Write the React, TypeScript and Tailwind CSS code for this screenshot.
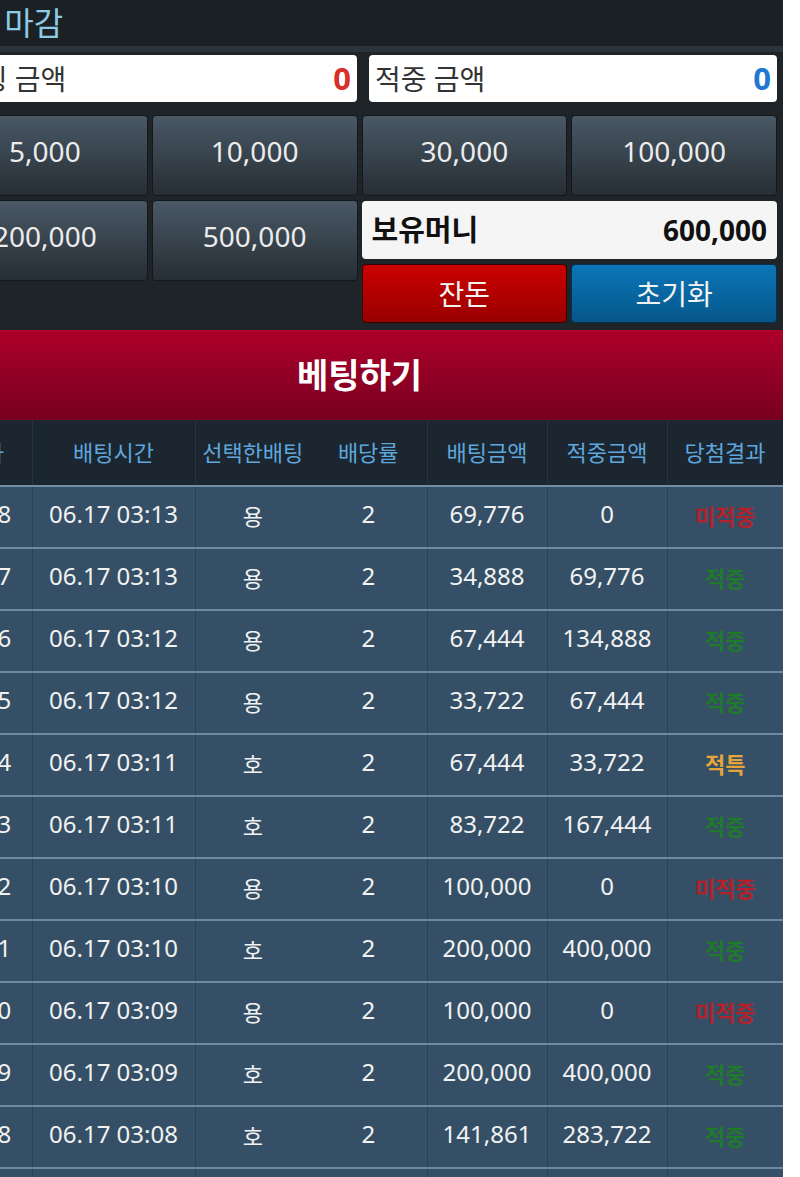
import React from "react";

const amounts = ["5,000", "10,000", "30,000", "100,000"];

const rows = [
  ["1208", "06.17 03:13", "용", "2", "69,776", "0", "미적중"],
  ["1207", "06.17 03:13", "용", "2", "34,888", "69,776", "적중"],
  ["1206", "06.17 03:12", "용", "2", "67,444", "134,888", "적중"],
  ["1205", "06.17 03:12", "용", "2", "33,722", "67,444", "적중"],
  ["1204", "06.17 03:11", "호", "2", "67,444", "33,722", "적특"],
  ["1203", "06.17 03:11", "호", "2", "83,722", "167,444", "적중"],
  ["1202", "06.17 03:10", "용", "2", "100,000", "0", "미적중"],
  ["1201", "06.17 03:10", "호", "2", "200,000", "400,000", "적중"],
  ["1200", "06.17 03:09", "용", "2", "100,000", "0", "미적중"],
  ["1199", "06.17 03:09", "호", "2", "200,000", "400,000", "적중"],
  ["1198", "06.17 03:08", "호", "2", "141,861", "283,722", "적중"],
  ["1197", "06.17 03:08", "용", "2", "100,000", "200,000", "적중"],
];

const resultColor: Record<string, string> = {
  미적중: "text-[#b3222a]",
  적중: "text-[#1f7a2c]",
  적특: "text-[#e6a53a]",
};

const headers = ["회차", "배팅시간", "선택한배팅", "배당률", "배팅금액", "적중금액", "당첨결과"];
const widths = ["w-[96px]", "w-[163px]", "w-[115px]", "w-[117px]", "w-[120px]", "w-[120px]", "w-[116px]"];

function AmountButton({ label }: { label: string }) {
  return (
    <button className="h-[81px] rounded-[4px] border border-[#14181b] bg-linear-to-b from-[#4a5966] to-[#262e35] pb-[9px] text-[28px] text-[#ececec]">
      {label}
    </button>
  );
}

export default function App() {
  return (
    <div className="min-h-[1177px] bg-white font-['Noto_Sans','Noto_Sans_CJK_KR',sans-serif]">
      <div className="w-[783px] overflow-hidden bg-[#1e2428]">
        <div className="ml-[-64px] w-[847px]">
          {/* top bar */}
          <div className="flex h-[46px] items-center bg-[#1b2024] pl-[1px] text-[32px] text-[#8ccbe3]">
            베팅 마감
          </div>

          {/* bet panel */}
          <div className="border-t-[6px] border-[#2b343b] px-[6px] pt-[3px] pb-[7px]">
            <div className="flex gap-3">
              <div className="flex h-[47px] flex-1 items-center justify-between rounded-[4px] bg-white pr-[6px] pl-[14px]">
                <span className="text-[28px] text-[#333]">배팅 금액</span>
                <span className="text-[31px] font-bold text-[#d8302b]">0</span>
              </div>
              <div className="flex h-[47px] w-[408px] items-center justify-between rounded-[4px] bg-white pr-[6px] pl-[6px]">
                <span className="text-[28px] text-[#333]">적중 금액</span>
                <span className="text-[31px] font-bold text-[#1f78d1]">0</span>
              </div>
            </div>

            <div className="mt-[13px] grid grid-cols-4 gap-x-[4px] gap-y-[4px]">
              {amounts.map((a) => (
                <AmountButton key={a} label={a} />
              ))}
              <AmountButton label="200,000" />
              <AmountButton label="500,000" />
              <div className="col-span-2 flex flex-col gap-[5px] pt-[1px]">
                <div className="flex h-[58px] items-center justify-between rounded-[4px] bg-[#f5f5f5] pr-[10px] pl-[10px]">
                  <span className="text-[29px] font-bold text-[#111]">보유머니</span>
                  <span className="text-[28px] font-bold text-[#111]">600,000</span>
                </div>
                <div className="grid grid-cols-2 gap-[4px]">
                  <button className="h-[59px] rounded-[4px] border border-[#3a0000] bg-linear-to-b from-[#cc0000] to-[#980000] text-[28px] text-[#f3f3f3]">
                    잔돈
                  </button>
                  <button className="h-[59px] rounded-[4px] border border-[#06304d] bg-linear-to-b from-[#0b76b8] to-[#06578b] text-[28px] text-[#f3f3f3]">
                    초기화
                  </button>
                </div>
              </div>
            </div>
          </div>

          {/* bet button */}
          <div className="flex h-[90px] items-center justify-center bg-linear-to-b from-[#ad0029] to-[#780020] text-[34px] font-bold text-white">
            베팅하기
          </div>

          {/* history table */}
          <table className="w-[847px] table-fixed border-collapse">
            <thead>
              <tr className="h-[66px] bg-[#1b2630]">
                {headers.map((h, i) => (
                  <th
                    key={h}
                    className={`${widths[i]} ${i === 2 ? "" : "border-r border-r-[#283540]"} border-b-2 border-b-[#6f8fa5] text-[22px] font-normal text-[#5fa6dc]`}
                  >
                    {h}
                  </th>
                ))}
              </tr>
            </thead>
            <tbody>
              {rows.map((r) => (
                <tr key={r[0]} className="h-[62px] border-b-2 border-[#6a8aa1] bg-[#355066]">
                  {r.map((c, i) => (
                    <td
                      key={i}
                      className={
                        i === 6
                          ? `pb-[2px] text-center text-[22px] font-bold ${resultColor[c]}`
                          : i === 2
                            ? "pb-[2px] text-center text-[22px] text-[#f2f2f2]"
                            : "border-r border-[#28405a] pb-[6px] text-center text-[24px] text-[#f2f2f2]"
                      }
                    >
                      {c}
                    </td>
                  ))}
                </tr>
              ))}
            </tbody>
          </table>
        </div>
      </div>
    </div>
  );
}
